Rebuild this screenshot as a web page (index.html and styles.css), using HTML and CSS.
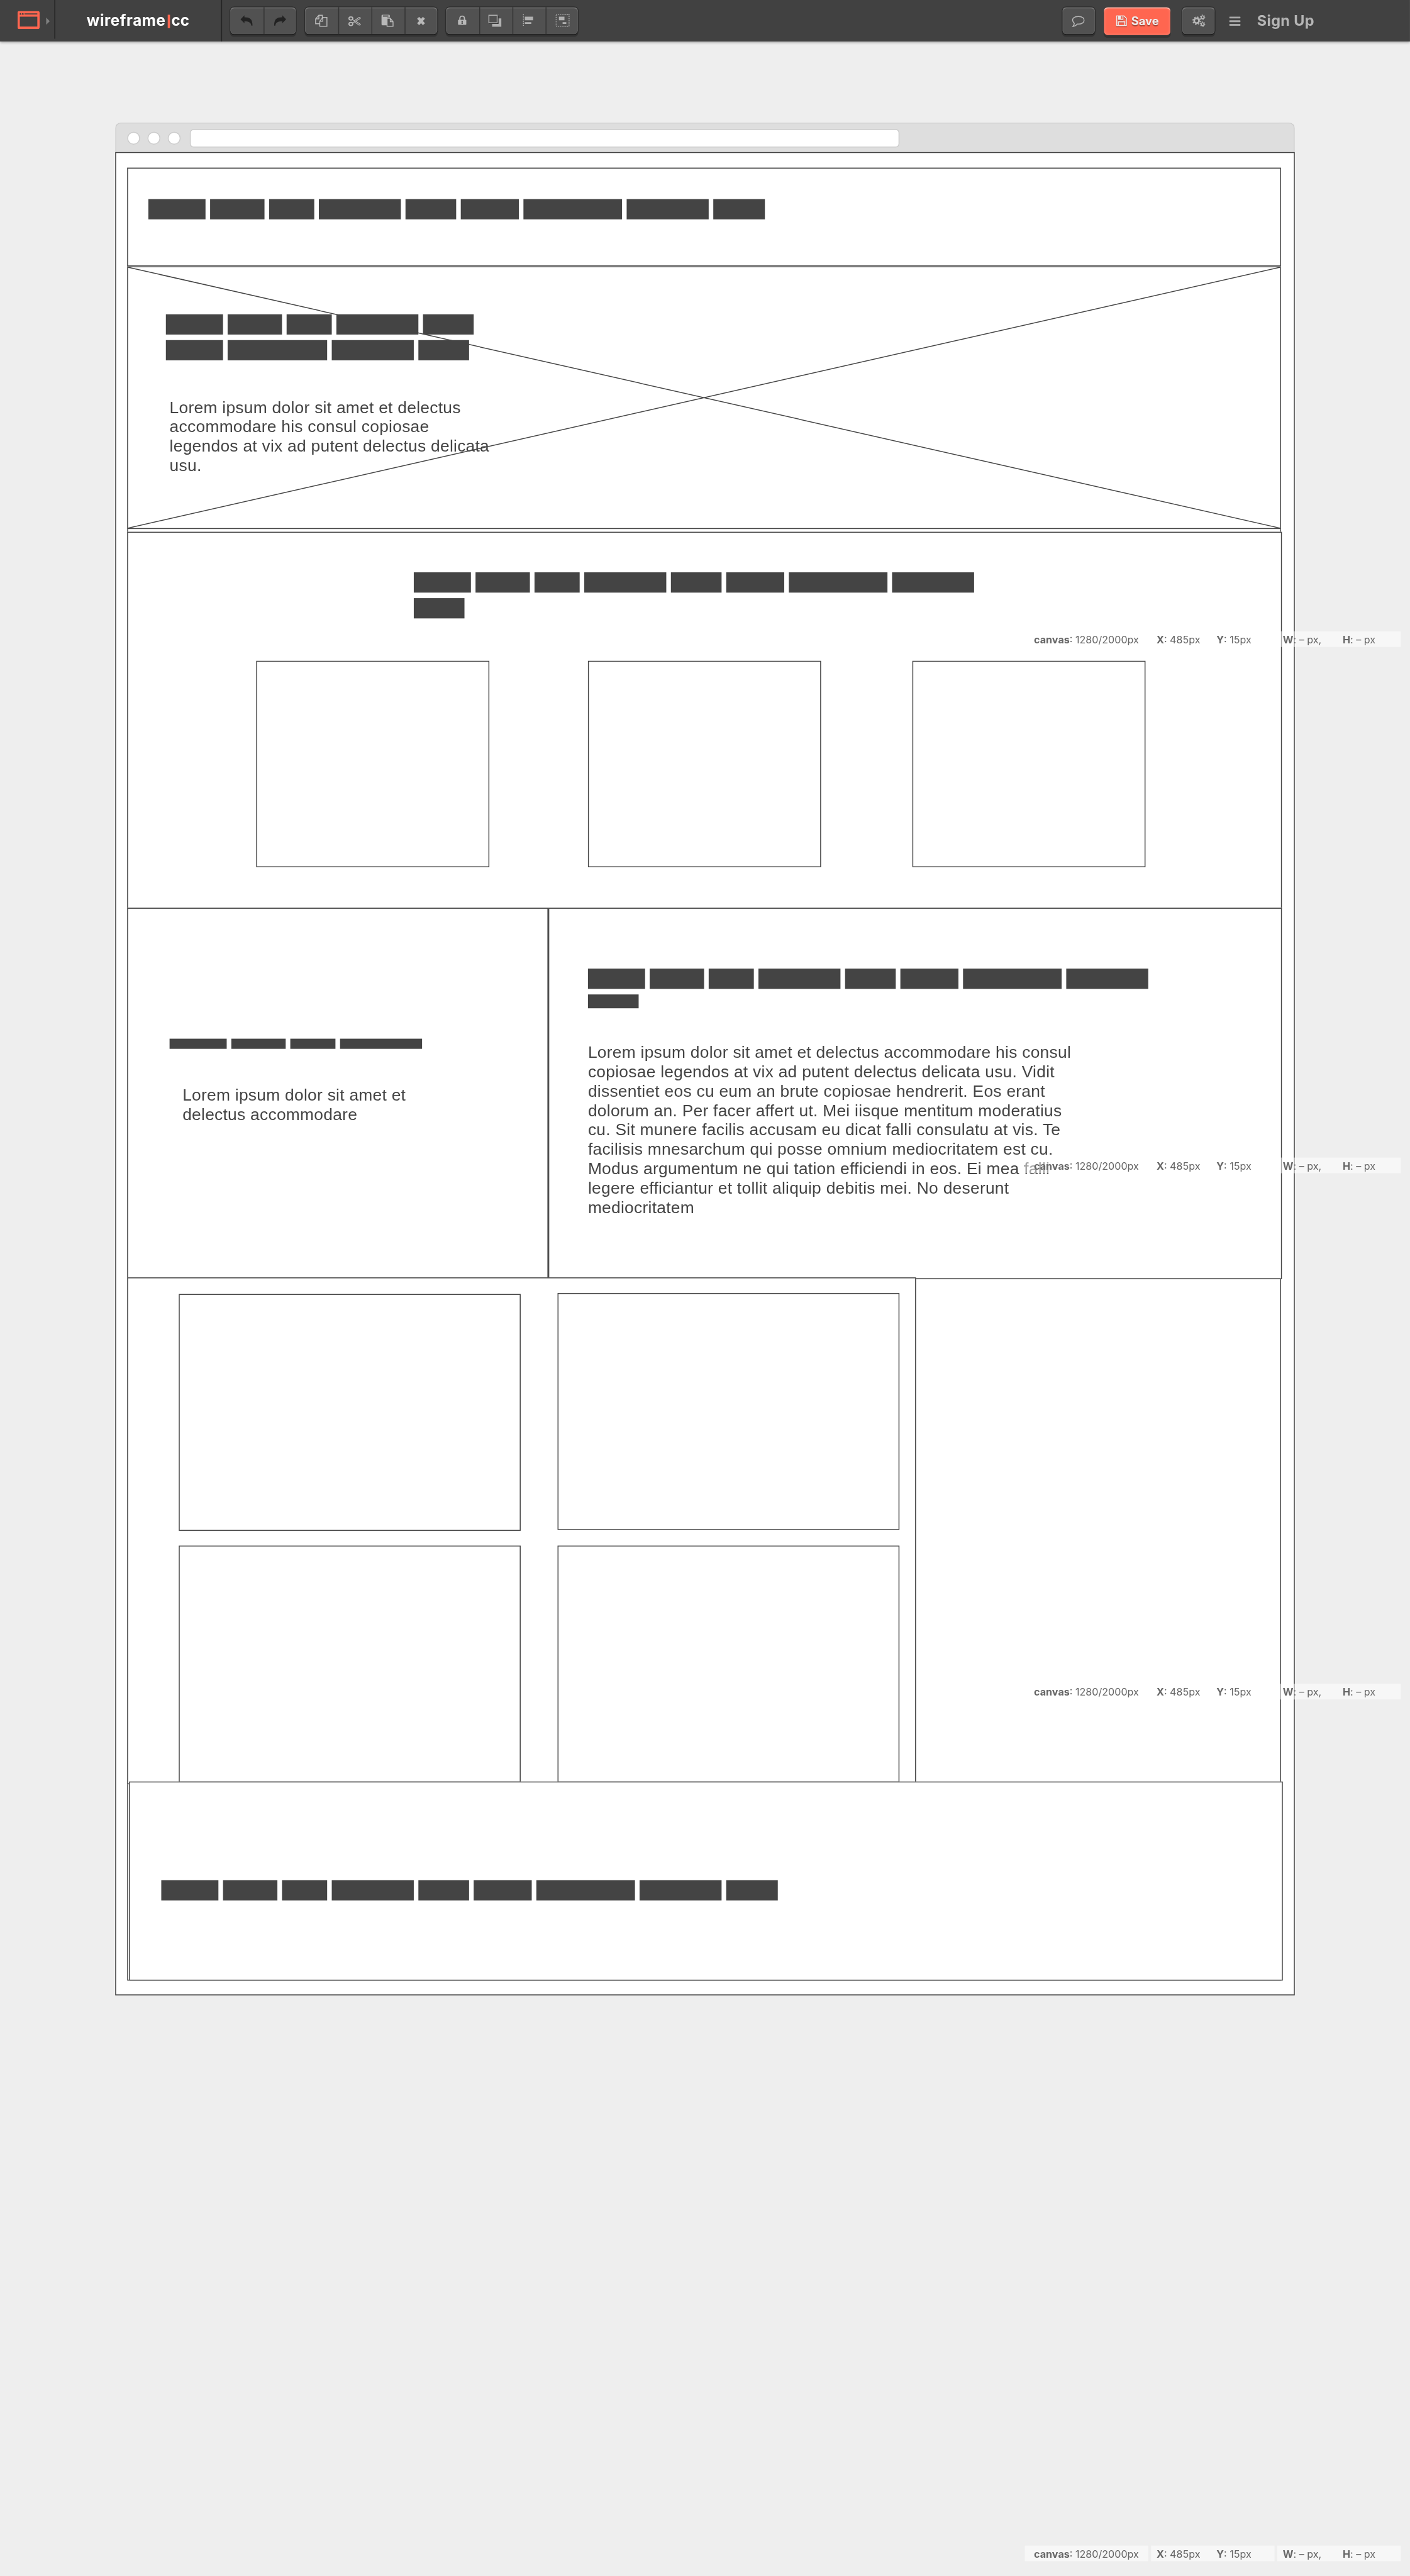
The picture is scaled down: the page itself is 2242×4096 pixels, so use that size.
FILE: index.html
```html
<!DOCTYPE html>
<html lang="en">
<head>
<meta charset="utf-8">
<title>wireframe|cc</title>
<link rel="stylesheet" href="styles.css">
</head>
<body>
<div class="app">
  <header class="toolbar">
    <div class="mode">
      <svg class="mode-icon" viewBox="0 0 48 39"><path fill="#ff6650" fill-rule="evenodd" d="M4 0H44Q48 0 48 4V35Q48 39 44 39H4Q0 39 0 35V4Q0 0 4 0ZM5 12V33.500H43V12ZM15 5V7.500H43V5Z"/><circle cx="6.500" cy="6.200" r="1.900" fill="#414141"/><circle cx="11.500" cy="6.200" r="1.900" fill="#414141"/></svg>
      <svg class="mode-arrow" viewBox="0 0 8 16"><path fill="#7f7f7f" d="M0 0L8 8L0 16Z"/></svg>
    </div>
    <div class="logo"><span class="logo-name">wireframe</span><i class="logo-bar"></i><span>cc</span></div>
    <div class="group history">
      <button class="tool"><svg viewBox="0 0 72 58"><path fill="#222" d="M22 26L30.500 17V21.700C42 21.500 48 25 48 39.500H45.500C44.500 32.500 39 30.300 30.500 30.500V34.500Z"/></svg></button>
      <button class="tool"><svg viewBox="0 0 72 58"><path fill="#222" d="M49 26L40.500 17V21.700C29 21.500 23 25 23 39.500H25.500C26.500 32.500 32 30.300 40.500 30.500V34.500Z"/></svg></button>
    </div>
    <div class="group edit">
      <button class="tool"><svg viewBox="0 0 72 58"><g fill="none" stroke="#b8b8b8" stroke-width="2"><path d="M32 35.500H23V25L30 17H37.500V23M23 25H30V17"/><path d="M32 30L38.500 22H47.500V41H32ZM32 30H38.500V22"/></g></svg></button>
      <button class="tool"><svg viewBox="0 0 72 58"><g fill="none" stroke="#b8b8b8"><ellipse cx="27.500" cy="24" rx="4.200" ry="3.400" stroke-width="2.400"/><ellipse cx="27.500" cy="36" rx="4.200" ry="3.400" stroke-width="2.400"/><path stroke-width="1.500" stroke-linejoin="round" d="M31 26.500L35 29L45.500 21.500L48 22.500V24L38 30L48 36.500V38L45.500 38.500L35 31.500L31 33.500M35 29L38 30L35 31.500"/></g></svg></button>
      <button class="tool"><svg viewBox="0 0 72 58"><path fill="#b8b8b8" fill-rule="evenodd" d="M24 16H38Q40 16 40 18V21.500H34.500V39H24Q22 39 22 37V18Q22 16 24 16ZM25 17.500V20H37V17.500Z"/><path fill="#515151" stroke="#b8b8b8" stroke-width="2" d="M34 23.500H41L47 31V41H34ZM41 23.500V31H47"/></svg></button>
      <button class="tool"><svg viewBox="0 0 72 58"><path fill="none" stroke="#b8b8b8" stroke-width="6" d="M29.500 22.500L42 36.500M42 22.500L29.500 36.500"/></svg></button>
    </div>
    <div class="group arrange">
      <button class="tool"><svg viewBox="0 0 72 58"><path fill="none" stroke="#b8b8b8" stroke-width="2.600" d="M30 28V24.500Q30 19 35 19T40 24.500V28"/><path fill="#b8b8b8" fill-rule="evenodd" d="M27.500 27H42.500Q44 27 44 28.500V36.500Q44 38 42.500 38H27.500Q26 38 26 36.500V28.500Q26 27 27.500 27ZM33.500 29.500V32L34.200 33L33.200 36H36.800L35.800 33L36.500 32V29.500Z"/></svg></button>
      <button class="tool"><svg viewBox="0 0 72 58"><path fill="#b0b0b0" d="M28 24H48V42H28Z"/><path fill="#333" d="M21 18H42V36H21Z"/><path fill="#515151" stroke="#b0b0b0" stroke-width="2" d="M21 17H39V33.500H21Z"/></svg></button>
      <button class="tool"><svg viewBox="0 0 72 58"><path fill="none" stroke="#b0b0b0" stroke-width="2" stroke-dasharray="2 2" d="M24 14V42"/><path fill="#b0b0b0" d="M27 20H45V28H27ZM27 32H41V36H27Z"/></svg></button>
      <button class="tool"><svg viewBox="0 0 72 58"><path fill="none" stroke="#b0b0b0" stroke-width="2" stroke-dasharray="2 2" d="M23 15H51V41H23Z"/><path fill="#b0b0b0" d="M29 20H41V28H29ZM37 32H45V36H37Z"/></svg></button>
    </div>
    <div class="group comment">
      <button class="tool"><svg viewBox="0 0 70 58"><path fill="none" stroke="#b8b8b8" stroke-width="2" d="M25.500 34.500C21 30 20.500 26 24 22.500C28.500 19 40 19 44.500 22.500C48.500 27 47 32 42.500 34.500C39 36.500 35 36.500 32 36C30 38.500 26 41 22.500 41.500C24.500 39 25.500 37 25.500 34.500Z"/></svg></button>
    </div>
    <button class="save">
      <svg class="save-icon" viewBox="0 0 24 24"><path fill="none" stroke="#ededed" stroke-width="2" d="M1.500 1.500H17L22.500 7V22.500H1.500ZM5 22V14.500H19V22"/><path fill="#ededed" fill-rule="evenodd" d="M4.500 1H16V10H4.500ZM11 2.500V8H14V2.500Z"/></svg>
      <span>Save</span>
    </button>
    <div class="group settings">
      <button class="tool"><svg viewBox="0 0 70 58"><g fill="none" stroke="#b8b8b8"><circle cx="31" cy="29" r="5.200" stroke-width="3.600"/><circle cx="31" cy="29" r="8" stroke-width="2.400" stroke-dasharray="3.140 3.143"/><circle cx="44" cy="21.500" r="3" stroke-width="2.200"/><circle cx="44" cy="21.500" r="4.800" stroke-width="1.800" stroke-dasharray="2.500 2.526"/><circle cx="44" cy="36.500" r="3" stroke-width="2.200"/><circle cx="44" cy="36.500" r="4.800" stroke-width="1.800" stroke-dasharray="2.500 2.526"/></g></svg></button>
    </div>
    <div class="menu"><i></i><i></i><i></i></div>
    <a class="signup">Sign Up</a>
  </header>

  <main class="browser">
    <div class="chrome"><i class="dot"></i><i class="dot"></i><i class="dot"></i><div class="address"></div></div>
    <div class="canvas">
      <div class="shape backdrop"></div>
      <div class="shape head"></div>
      <div class="shape hero"><svg viewBox="0 0 2500 566" preserveAspectRatio="none"><path fill="none" stroke="#444" stroke-width="2" d="M0 0L2500 566M2500 0L0 566"/></svg></div>
      <div class="shape features"></div>
      <div class="shape aside"></div>
      <div class="shape article"></div>
      <div class="shape rail"></div>
      <div class="shape gallery"></div>

      <div class="words at-head"><div class="row"><i class="w124"></i><i class="w118"></i><i class="w98"></i><i class="w178"></i><i class="w110"></i><i class="w126"></i><i class="w214"></i><i class="w178"></i><i class="w112"></i></div></div>
      <div class="words at-hero"><div class="row"><i class="w124"></i><i class="w118"></i><i class="w98"></i><i class="w178"></i><i class="w110"></i></div><div class="row"><i class="w124"></i><i class="w216"></i><i class="w178"></i><i class="w110"></i></div></div>
      <p class="copy hero-copy">Lorem ipsum dolor sit amet et delectus<br>accommodare his consul copiosae<br>legendos at vix ad putent delectus delicata<br>usu.</p>

      <div class="words at-features"><div class="row"><i class="w124"></i><i class="w118"></i><i class="w98"></i><i class="w178"></i><i class="w110"></i><i class="w126"></i><i class="w214"></i><i class="w178"></i></div><div class="row"><i class="w110"></i></div></div>
      <div class="shape card card-1"></div>
      <div class="shape card card-2"></div>
      <div class="shape card card-3"></div>

      <div class="words thin at-aside"><div class="row"><i class="w124"></i><i class="w118"></i><i class="w98"></i><i class="w178"></i></div></div>
      <p class="copy aside-copy">Lorem ipsum dolor sit amet et<br>delectus accommodare</p>

      <div class="words at-article"><div class="row"><i class="w124"></i><i class="w118"></i><i class="w98"></i><i class="w178"></i><i class="w110"></i><i class="w126"></i><i class="w214"></i><i class="w178"></i></div><div class="row short"><i class="w110"></i></div></div>
      <p class="copy article-copy">Lorem ipsum dolor sit amet et delectus accommodare his consul<br>copiosae legendos at vix ad putent delectus delicata usu. Vidit<br>dissentiet eos cu eum an brute copiosae hendrerit. Eos erant<br>dolorum an. Per facer affert ut. Mei iisque mentitum moderatius<br>cu. Sit munere facilis accusam eu dicat falli consulatu at vis. Te<br>facilisis mnesarchum qui posse omnium mediocritatem est cu.<br>Modus argumentum ne qui tation efficiendi in eos. Ei mea falli<br>legere efficiantur et tollit aliquip debitis mei. No deserunt<br>mediocritatem</p>

      <div class="shape tile tile-1"></div>
      <div class="shape tile tile-2"></div>
      <div class="shape tile tile-3"></div>
      <div class="shape tile tile-4"></div>

      <div class="shape foot"></div>
      <div class="words at-foot"><div class="row"><i class="w124"></i><i class="w118"></i><i class="w98"></i><i class="w178"></i><i class="w110"></i><i class="w126"></i><i class="w214"></i><i class="w178"></i><i class="w112"></i></div></div>
    </div>
  </main>

  <div class="status status-1"><div class="cell first"><span><b>canvas</b>: 1280/2000px</span></div><div class="cell"><span><b>X</b>: 485px</span><span><b>Y</b>: 15px</span></div><div class="cell"><span><b>W</b>: – px,</span><span><b>H</b>: – px</span></div></div>
  <div class="status status-2"><div class="cell first"><span><b>canvas</b>: 1280/2000px</span></div><div class="cell"><span><b>X</b>: 485px</span><span><b>Y</b>: 15px</span></div><div class="cell"><span><b>W</b>: – px,</span><span><b>H</b>: – px</span></div></div>
  <div class="status status-3"><div class="cell first"><span><b>canvas</b>: 1280/2000px</span></div><div class="cell"><span><b>X</b>: 485px</span><span><b>Y</b>: 15px</span></div><div class="cell"><span><b>W</b>: – px,</span><span><b>H</b>: – px</span></div></div>
  <div class="status status-4"><div class="cell first"><span><b>canvas</b>: 1280/2000px</span></div><div class="cell"><span><b>X</b>: 485px</span><span><b>Y</b>: 15px</span></div><div class="cell"><span><b>W</b>: – px,</span><span><b>H</b>: – px</span></div></div>
</div>
</body>
</html>
```
FILE: styles.css
```css
* { box-sizing: border-box; }

html, body { margin: 0; width: 2242px; height: 4096px; overflow: hidden; background: #eee; }

.app {
  position: relative;
  width: 3060px;
  height: 5590px;
  margin: 0 -818px -1494px 0;
  transform: scale(0.73267, 0.73273);
  transform-origin: 0 0;
  font-family: Inter, "Liberation Sans", sans-serif;
}

i { display: block; }

/* Toolbar */
.toolbar {
  display: flex;
  align-items: flex-start;
  height: 90px;
  background: #414141;
  box-shadow: 0 2px 6px rgba(0, 0, 0, .4);
  clip-path: inset(0 0 -12px 0);
}
.mode { display: flex; align-items: flex-start; width: 120px; height: 84px; padding: 24px 0 0 38px; border-right: 2px solid #222; }
.mode-icon { width: 48px; height: 39px; }
.mode-arrow { width: 8px; height: 16px; margin: 14px 0 0 14px; }
.logo {
  display: flex;
  width: 362px;
  height: 90px;
  padding-left: 68px;
  border-right: 2px solid #222;
  color: #fff;
  font-size: 33px;
  font-weight: 700;
  line-height: 88px;
}
.logo-name { width: 176px; letter-spacing: .8px; }
.logo-bar { width: 5px; height: 29px; margin: 32px 3px 0 0; background: #ff6650; }

button { margin: 0; padding: 0; border: 0; background: none; font-family: inherit; }
.group {
  display: flex;
  height: 58px;
  margin-top: 16px;
  border-radius: 8px;
  background: #515151;
  box-shadow: inset 0 2px #7a7a7a, inset 1px 0 #666, inset -1px 0 #666, 0 2px #1e1e1e, 0 0 0 2px #2e2e2e, 0 5px 0 1px #333;
}
.tool { flex: 1; height: 58px; }
.tool + .tool { border-left: 2px solid #333; }
.tool svg { display: block; width: 72px; height: 58px; }
.tool + .tool svg { margin-left: -2px; }
.history { width: 142px; margin-left: 18px; }
.edit { width: 287px; margin-left: 20px; }
.arrange { width: 286px; margin-left: 19px; }
.comment { width: 70px; margin-left: 1052px; }
.settings { width: 70px; margin-left: 26px; }
.comment svg, .settings svg { width: 70px; }
.save {
  display: flex;
  width: 144px;
  height: 60px;
  margin: 16px 0 0 20px;
  padding-left: 26px;
  border-radius: 8px;
  background: #ff6650;
  box-shadow: inset 0 2px #ffc4b8, inset 0 0 6px #ff9080, 0 5px 0 1px #333;
  color: #ededed;
  font-size: 25px;
  font-weight: 700;
  line-height: 60px;
  text-shadow: 0 2px 1px rgba(0, 0, 0, .35);
}
.save-icon { width: 24px; height: 24px; margin: 17px 9px 0 0; filter: drop-shadow(0 2px 0 rgba(0, 0, 0, .3)); }
.menu { display: grid; gap: 4px; width: 24px; margin: 36px 0 0 32px; }
.menu i { height: 4px; border-radius: 1px; background: #a8a8a8; }
.signup { margin-left: 36px; color: #b4b4b4; font-size: 32px; font-weight: 700; line-height: 90px; letter-spacing: .5px; }

/* Browser frame */
.browser { width: 2560px; margin: 176px 0 0 250px; }
.chrome {
  display: flex;
  align-items: center;
  gap: 16px;
  height: 64px;
  padding: 2px 0 0 26px;
  border: 2px solid #ccc;
  border-bottom: 0;
  border-radius: 12px 12px 0 0;
  background: #dedede;
}
.chrome .dot { width: 28px; height: 28px; border: 2px solid #ccc; border-radius: 50%; background: #fff; }
.chrome .dot:first-child { margin-left: -2px; }
.address { width: 1540px; height: 40px; margin-left: 4px; border: 2px solid #ccc; border-radius: 8px; background: #fff; }

/* Free canvas: every shape keeps the place it was drawn at */
.canvas { position: relative; height: 4000px; border: 2px solid #444; background: #fff; }
.shape { position: absolute; border: 2px solid #444; background: #fff; }
.backdrop { left: 24px; top: 32px; width: 2504px; height: 3934px; }
.head { left: 24px; top: 32px; width: 2504px; height: 214px; }
.hero { left: 24px; top: 246px; width: 2504px; height: 570px; }
.hero svg { display: block; width: 100%; height: 100%; }
.features { left: 24px; top: 822px; width: 2506px; height: 818px; }
.aside { left: 24px; top: 1638px; width: 914px; height: 804px; }
.article { left: 938px; top: 1638px; width: 1592px; height: 806px; }
.rail { left: 1734px; top: 2442px; width: 794px; height: 1100px; }
.gallery { left: 24px; top: 2440px; width: 1712px; height: 1100px; }
.card { top: 1102px; width: 506px; height: 448px; }
.card-1 { left: 304px; }
.card-2 { left: 1024px; }
.card-3 { left: 1728px; }
.tile { width: 742px; height: 514px; }
.tile-1 { left: 136px; top: 2476px; }
.tile-2 { left: 958px; top: 2474px; }
.tile-3 { left: 136px; top: 3022px; }
.tile-4 { left: 958px; top: 3022px; }
.foot { left: 28px; top: 3534px; width: 2504px; height: 432px; }

/* Blocked-out headline words */
.words { position: absolute; display: grid; gap: 12px; }
.row { display: flex; gap: 10px; height: 44px; }
.row i { background: #444; }
.thin .row { height: 22px; }
.row.short { height: 30px; }
.w98 { width: 98px; }
.w110 { width: 110px; }
.w112 { width: 112px; }
.w118 { width: 118px; }
.w124 { width: 124px; }
.w126 { width: 126px; }
.w178 { width: 178px; }
.w214 { width: 214px; }
.w216 { width: 216px; }
.at-head { left: 70px; top: 100px; }
.at-hero { left: 108px; top: 350px; }
.at-features { left: 646px; top: 910px; }
.at-aside { left: 116px; top: 1922px; }
.at-article { left: 1024px; top: 1770px; }
.at-foot { left: 98px; top: 3748px; }

.copy {
  position: absolute;
  margin: 0;
  color: #444;
  font: 36px/42px "Liberation Sans", Arial, sans-serif;
  letter-spacing: .36px;
  white-space: nowrap;
}
.hero-copy { left: 116px; top: 531px; }
.aside-copy { left: 144px; top: 2023px; }
.article-copy { left: 1024px; top: 1931px; }

/* Coordinates read-out floating over the canvas */
.status { position: absolute; left: 2224px; display: flex; gap: 6px; }
.status-1 { top: 1370px; }
.status-2 { top: 2512px; }
.status-3 { top: 3654px; }
.status-4 { top: 5524px; }
.cell {
  display: flex;
  width: 268px;
  height: 34px;
  padding-left: 12px;
  background: rgba(255, 255, 255, .5);
  color: #666;
  font-size: 22px;
  line-height: 36px;
  white-space: nowrap;
}
.cell.first { padding-left: 20px; }
.cell span { flex: none; width: 130px; }
.cell span + span { width: 126px; }
.cell.first span { width: auto; }
```
